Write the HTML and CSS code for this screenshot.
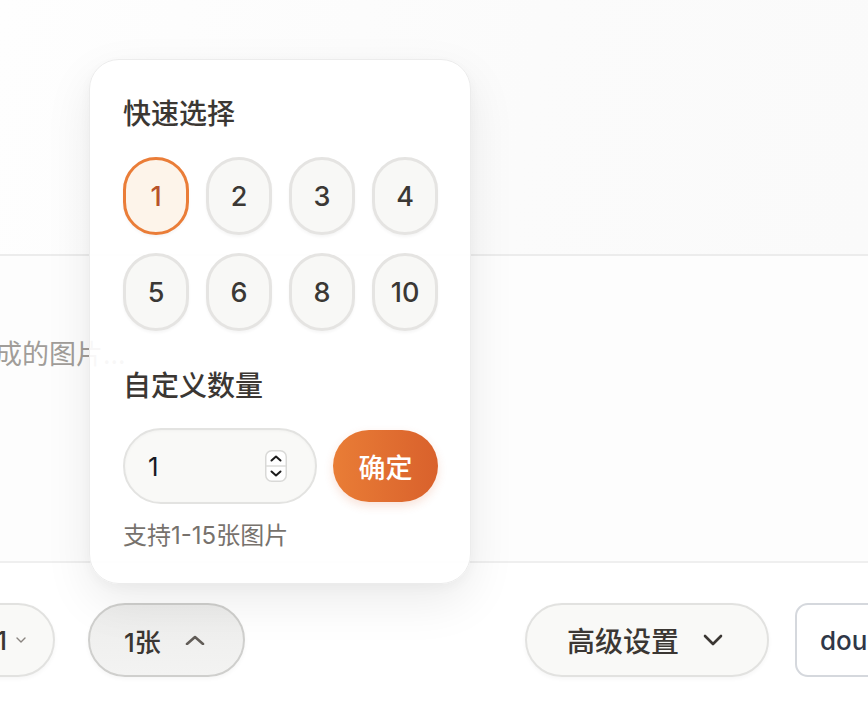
FILE: index.html
```html
<!DOCTYPE html>
<html lang="zh-CN">
<head>
<meta charset="utf-8">
<title>生成图片</title>
<link rel="stylesheet" href="styles.css">
</head>
<body>
<div class="app">
  <section class="preview"></section>
  <section class="prompt">
    <p class="placeholder">生成的图片...</p>
  </section>
  <section class="toolbar">
    <button class="pill ratio">1:1
      <svg class="chev-sm" viewBox="0 0 10 6" width="10" height="6"><polyline points="1,1 5,5 9,1" fill="none" stroke="#8a8580" stroke-width="1.4" stroke-linecap="round" stroke-linejoin="round"/></svg>
    </button>
    <div class="count-wrap">
      <button class="pill count">1张
        <svg class="chev" viewBox="0 0 20 10" width="20" height="10"><polyline points="2,9 10,2 18,9" fill="none" stroke="#625d58" stroke-width="2.6" stroke-linecap="round" stroke-linejoin="round"/></svg>
      </button>
      <div class="popover">
        <h3 class="pop-title">快速选择</h3>
        <div class="quick-grid">
          <button class="num active">1</button>
          <button class="num">2</button>
          <button class="num">3</button>
          <button class="num">4</button>
          <button class="num">5</button>
          <button class="num">6</button>
          <button class="num">8</button>
          <button class="num">10</button>
        </div>
        <h3 class="pop-title custom">自定义数量</h3>
        <div class="custom-row">
          <div class="num-input">
            <span class="num-value">1</span>
            <span class="spinner">
              <svg viewBox="0 0 22 32" width="22" height="32">
                <rect x="0.75" y="0.75" width="20.5" height="30.5" rx="6" fill="#fff" stroke="#d9d9d7" stroke-width="1.5"/>
                <line x1="1" y1="16" x2="21" y2="16" stroke="#dcdcda" stroke-width="1.5"/>
                <polyline points="6.5,10.5 11,6.5 15.5,10.5" fill="none" stroke="#1c1c1c" stroke-width="2" stroke-linecap="round" stroke-linejoin="round"/>
                <polyline points="6.5,21.5 11,25.5 15.5,21.5" fill="none" stroke="#1c1c1c" stroke-width="2" stroke-linecap="round" stroke-linejoin="round"/>
              </svg>
            </span>
          </div>
          <button class="confirm">确定</button>
        </div>
        <p class="hint">支持1-15张图片</p>
      </div>
    </div>
    <button class="pill advanced">高级设置
      <svg class="chev" viewBox="0 0 20 12" width="20" height="12"><polyline points="2,2 10,10 18,2" fill="none" stroke="#3b3733" stroke-width="2.6" stroke-linecap="round" stroke-linejoin="round"/></svg>
    </button>
    <button class="model">doubao-seedream-4-0</button>
  </section>
</div>
</body>
</html>
```
FILE: styles.css
```css
* { box-sizing: border-box; }
html, body {
  margin: 0;
  padding: 0;
  width: 868px;
  height: 712px;
  overflow: hidden;
  background: #ffffff;
  font-family: Inter, "Noto Sans CJK SC", sans-serif;
}
button { font-family: inherit; cursor: pointer; }

.app {
  display: flex;
  flex-direction: column;
  width: 868px;
  height: 712px;
}

.preview {
  height: 256px;
  flex-shrink: 0;
  background: linear-gradient(100deg, #fefefe 0%, #fbfbfb 60%, #fafafa 100%);
  border-bottom: 2px solid #ececec;
}

.prompt {
  height: 307px;
  flex-shrink: 0;
  background: #fdfdfd;
  border-bottom: 2px solid #efefef;
  overflow: hidden;
  padding-top: 77px;
}
.placeholder {
  margin: 0 0 0 -32px;
  font-family: "Noto Sans CJK SC", sans-serif;
  font-size: 27px;
  line-height: 40px;
  color: #a19d99;
  white-space: nowrap;
}

.toolbar {
  display: flex;
  align-items: center;
  padding-top: 40px;
  margin-left: -55px;
}

.pill {
  flex-shrink: 0;
  height: 74px;
  border-radius: 37px;
  border: 2px solid #e2e2e0;
  background: #f9f9f7;
  display: flex;
  align-items: center;
  color: #3b3733;
  box-shadow: 0 2px 4px rgba(0,0,0,0.04);
}

.ratio {
  width: 110px;
  justify-content: flex-end;
  padding: 0 27px 0 0;
  font-size: 26px;
  font-weight: 500;
  gap: 9px;
}

.count-wrap {
  position: relative;
  margin-left: 33px;
  flex-shrink: 0;
}
.count {
  width: 157px;
  padding: 0 0 0 34px;
  gap: 24px;
  font-family: Inter, "Noto Sans CJK SC", sans-serif;
  font-size: 26px;
  font-weight: 500;
  background: linear-gradient(180deg, #ededec 0%, #f3f3f2 100%);
  border-color: #cfcfcd;
}

.advanced {
  width: 244px;
  margin-left: 280px;
  padding: 0 0 0 40px;
  gap: 24px;
  font-family: "Noto Sans CJK SC", sans-serif;
  font-size: 28px;
  font-weight: 500;
}

.model {
  flex-shrink: 0;
  margin-left: 26px;
  height: 74px;
  width: 320px;
  border-radius: 13px;
  border: 2px solid #d5d8dd;
  background: #ffffff;
  padding: 0 0 0 23px;
  text-align: left;
  font-size: 26px;
  font-weight: 500;
  color: #2f3747;
  white-space: nowrap;
}

/* Popover */
.popover {
  position: absolute;
  left: 1px;
  bottom: calc(100% + 19px);
  width: 382px;
  height: 525px;
  padding: 33px 32px 0 33px;
  background: rgba(255,255,255,0.92);
  border: 1px solid #ececec;
  border-radius: 30px;
  box-shadow: 0 18px 48px rgba(0,0,0,0.08), 0 4px 12px rgba(0,0,0,0.03);
  z-index: 5;
}

.pop-title {
  margin: 0;
  font-family: "Noto Sans CJK SC", sans-serif;
  font-size: 28px;
  line-height: 38px;
  font-weight: 500;
  color: #3b3733;
}
.pop-title.custom { margin-top: 34px; }

.quick-grid {
  margin-top: 26px;
  display: grid;
  grid-template-columns: repeat(4, 66px);
  grid-auto-rows: 78px;
  column-gap: 17px;
  row-gap: 18px;
}
.num {
  border: 3px solid #e5e4e2;
  background: #f8f8f6;
  border-radius: 33px;
  font-size: 27px;
  font-weight: 500;
  color: #3b3835;
  padding: 0;
  box-shadow: 0 2px 3px rgba(0,0,0,0.04);
}
.num.active {
  border-color: #ea7d38;
  background: #fdf4ea;
  color: #b8532a;
}

.custom-row {
  margin-top: 25px;
  display: flex;
  align-items: center;
  gap: 16px;
}
.num-input {
  flex: 1;
  height: 76px;
  border-radius: 38px;
  border: 2px solid #e3e3e1;
  background: #f9f9f7;
  display: flex;
  align-items: center;
  justify-content: space-between;
  padding: 0 28px 0 23px;
  box-shadow: inset 0 1px 3px rgba(0,0,0,0.03);
}
.num-value {
  font-size: 26px;
  color: #151a24;
}
.spinner { display: flex; }

.confirm {
  width: 105px;
  height: 72px;
  border: none;
  border-radius: 36px;
  background: linear-gradient(90deg, #e97d36 0%, #d9612c 100%);
  color: #ffffff;
  font-family: "Noto Sans CJK SC", sans-serif;
  font-size: 27px;
  font-weight: 500;
  box-shadow: 0 4px 10px rgba(217,97,44,0.18);
}

.hint {
  margin: 16px 0 0;
  font-family: Inter, "Noto Sans CJK SC", sans-serif;
  font-size: 24px;
  line-height: 32px;
  color: #77726d;
}
```
